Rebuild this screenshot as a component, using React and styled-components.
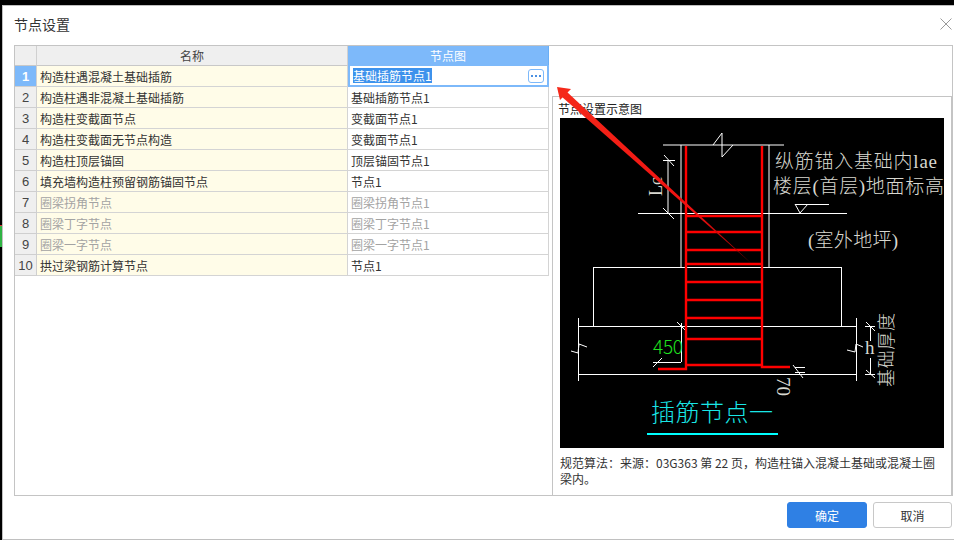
import React from 'react';
import styled, { createGlobalStyle } from 'styled-components';

const GlobalStyle = createGlobalStyle`
  html, body {
    margin: 0;
    padding: 0;
    background: #000;
    overflow: hidden;
  }
  * {
    box-sizing: border-box;
  }
`;

const FONT = `"Noto Sans CJK SC", "Liberation Sans", sans-serif`;

const Screen = styled.div`
  position: relative;
  width: 954px;
  height: 540px;
  padding: 5px 0 0 2px;
  background: #000;
  font-family: ${FONT};
  font-size: 12px;
  color: #333;
`;

const Window = styled.div`
  display: flex;
  flex-direction: column;
  height: 535px;
  background: #fff;
  border: 1px solid #c0c0c0;
  border-width: 1px 0 1px 1px;
`;

const TitleBar = styled.div`
  display: flex;
  align-items: center;
  justify-content: space-between;
  height: 39px;
  padding: 0 2px 3px 11px;
  font-size: 14px;
  color: #333;
`;

const CloseButton = styled.button`
  display: flex;
  width: 12px;
  height: 12px;
  padding: 0;
  border: 0;
  background: none;
`;

const Frame = styled.div`
  display: flex;
  height: 451px;
  margin: 0 1px 0 11px;
  border: 1px solid #c4c4c4;
`;

const Table = styled.div`
  flex: 0 0 537px;
  padding-right: 3px;
`;

const Row = styled.div`
  display: grid;
  grid-template-columns: 22px 311px 201px;
  height: ${p => (p.$head ? 20 : 21)}px;
`;

const HeadCell = styled.div`
  display: flex;
  align-items: center;
  justify-content: center;
  background: ${p => (p.$active ? '#7db9fa' : '#efefef')};
  color: ${p => (p.$active ? '#fff' : '#444')};
  border-right: 1px solid ${p => (p.$active ? '#69aef5' : '#d0d0d0')};
  border-bottom: 1px solid ${p => (p.$active ? '#69aef5' : '#c8c8c8')};
`;

const NumCell = styled.div`
  display: flex;
  align-items: center;
  justify-content: center;
  font-family: "Liberation Sans", sans-serif;
  font-size: 13px;
  font-weight: ${p => (p.$active ? 700 : 400)};
  background: ${p => (p.$active ? '#7db9fa' : '#efefef')};
  color: ${p => (p.$active ? '#fff' : '#444')};
  border-right: 1px solid #cfcfcf;
  border-bottom: 1px solid #cfcfcf;
`;

const Cell = styled.div`
  display: flex;
  align-items: center;
  padding-left: 3px;
  white-space: nowrap;
  background: ${p => (p.$name ? '#fffce8' : '#fff')};
  color: ${p => (p.$muted ? '#a3a3a3' : '#333')};
  border-right: 1px solid #d4d4d4;
  border-bottom: 1px solid #d4d4d4;
`;

const EditCell = styled.div`
  display: flex;
  align-items: center;
  justify-content: space-between;
  padding: 0 3px 0 3px;
  background: #fff;
  border: 2px solid #7db9fa;
  border-top-width: 1px;
  margin-top: -1px;
  height: 22px;
`;

const Selected = styled.span`
  display: block;
  line-height: 15px;
  background: #3d92ec;
  color: #fff;
  white-space: nowrap;
`;

const MoreButton = styled.button`
  display: flex;
  align-items: center;
  justify-content: center;
  gap: 2px;
  width: 16px;
  height: 14px;
  padding: 0;
  background: #fff;
  border: 1px solid #7db9fa;
  border-radius: 3px;
`;

const Dot = styled.i`
  width: 2px;
  height: 2px;
  background: #4a90e2;
`;

const Side = styled.div`
  display: flex;
  flex: 1;
  flex-direction: column;
  padding-top: 50px;
`;

const Panel = styled.div`
  flex: 1;
  padding-left: 5px;
  border: 1px solid #c4c4c4;
  border-width: 1px 1px 0 1px;
`;

const Caption = styled.div`
  height: 21px;
  line-height: 24px;
  color: #222;
`;

const Diagram = styled.svg`
  display: block;
  margin-left: 2px;
  width: 384px;
  height: 330px;
  background: #000;
`;

const Note = styled.p`
  margin: 7px 0 0 2px;
  width: 386px;
  line-height: 16px;
  font-size: 12px;
  color: #333;
`;

const Footer = styled.div`
  display: flex;
  justify-content: flex-end;
  gap: 6px;
  height: 43px;
  padding: 6px 2px 0 0;
`;

const Button = styled.button`
  width: ${p => (p.$primary ? 80 : 79)}px;
  height: 26px;
  padding: 0;
  font-family: ${FONT};
  font-size: 12px;
  border-radius: 3px;
  border: 1px solid ${p => (p.$primary ? '#2f80e4' : '#c8c8c8')};
  background: ${p => (p.$primary ? '#2f80e4' : '#fff')};
  color: ${p => (p.$primary ? '#fff' : '#333')};
`;

const Overlay = styled.svg`
  position: absolute;
  left: 0;
  top: 0;
  width: 954px;
  height: 540px;
  pointer-events: none;
`;

const DeskIcon = styled.div`
  position: absolute;
  left: 0;
  top: 225px;
  width: 2px;
  height: 22px;
  background: #2fb344;
  border-top: 1px solid #d33;
`;

const rows = [
  ['构造柱遇混凝土基础插筋', '基础插筋节点1'],
  ['构造柱遇非混凝土基础插筋', '基础插筋节点1'],
  ['构造柱变截面节点', '变截面节点1'],
  ['构造柱变截面无节点构造', '变截面节点1'],
  ['构造柱顶层锚固', '顶层锚固节点1'],
  ['填充墙构造柱预留钢筋锚固节点', '节点1'],
  ['圈梁拐角节点', '圈梁拐角节点1', true],
  ['圈梁丁字节点', '圈梁丁字节点1', true],
  ['圈梁一字节点', '圈梁一字节点1', true],
  ['拱过梁钢筋计算节点', '节点1'],
];

const NOTE = '规范算法\uFF1A来源\uFF1A03G363 第 22 页\uFF0C构造柱锚入混凝土基础或混凝土圈梁内\u3002';

const rungs = [216, 232, 250, 264, 282, 300, 318, 339, 365];

const whiteLines = [
  'M663 145H784', 'M713 145L722 133V157L733 145',
  'M681 145V267', 'M769 145V267',
  'M638 213.5H847',
  'M668 160V213', 'M663 160.5H675', 'M664 155L674 166', 'M663 208L674 219',
  'M795 204.5H829', 'M795 204L800 213L808 204',
  'M593 267.5H841', 'M593.5 267V326', 'M841.5 267V326',
  'M578 326.5H856', 'M578 374.5H856', 'M578.5 318V381', 'M856.5 318V381',
  'M571 351L578 353L579 344L587 347', 'M847 350L855 352L856 344L863 347',
  'M681.5 323V362', 'M653 362.5H681', 'M677 322L686 331', 'M653 367L662 358',
  'M795 367.5H805', 'M795 372.5H805', 'M793 365L803 378',
  'M870.5 326V341', 'M870.5 358V374', 'M865 326.5H875', 'M865 374.5H875',
  'M866 322L875 331', 'M866 370L875 378',
];

const CadText = styled.text`
  font-family: ${p => (p.$sans ? FONT : `"Liberation Serif", "Noto Sans CJK SC", serif`)};
  font-size: ${p => p.$size || 19}px;
  font-weight: 300;
  fill: ${p => p.$color || '#d8d8d0'};
`;

function FoundationDrawing() {
  return (
    <Diagram viewBox="560 118 384 330">
      <g stroke="#fff" strokeWidth="1" fill="none">
        {whiteLines.map(d => <path key={d} d={d} />)}
      </g>
      <g stroke="#f00" strokeWidth="2.4" fill="none">
        <path d="M686 146V369H658" />
        <path d="M762 146V367H790" />
        {rungs.map(y => <path key={y} d={`M686 ${y}H762`} />)}
      </g>
      <path d="M647 434H778" stroke="#0ff" strokeWidth="2" />
      <CadText x="775" y="168" textLength="162">纵筋锚入基础内lae</CadText>
      <CadText x="773" y="193" textLength="171">楼层(首层)地面标高</CadText>
      <CadText x="808" y="247" textLength="90">(室外地坪)</CadText>
      <CadText x="653" y="354" $sans $color="#1fe01f" textLength="30">450</CadText>
      <CadText x="865" y="354">h</CadText>
      <CadText x="651" y="421" $size={24} $color="#19e6e6" textLength="122">插筋节点一</CadText>
      <CadText transform="translate(662 196) rotate(-90)" $size={18}>Lc</CadText>
      <CadText transform="translate(777 377) rotate(90)" $size={19}>70</CadText>
      <CadText transform="translate(893 387) rotate(-90)" $size={18} textLength="74">基础厚度</CadText>
    </Diagram>
  );
}

export default function App() {
  return (
    <Screen>
      <GlobalStyle />
      <Window>
        <TitleBar>
          节点设置
          <CloseButton aria-label="关闭">
            <svg width="12" height="12" viewBox="0 0 12 12">
              <path d="M.5.5l11 11M11.5.5l-11 11" stroke="#9a9a9a" strokeWidth="1" fill="none" />
            </svg>
          </CloseButton>
        </TitleBar>
        <Frame>
          <Table>
            <Row $head>
              <HeadCell />
              <HeadCell>名称</HeadCell>
              <HeadCell $active>节点图</HeadCell>
            </Row>
            {rows.map(([name, node, muted], i) => (
              <Row key={name}>
                <NumCell $active={i === 0}>{i + 1}</NumCell>
                <Cell $name $muted={muted}>{name}</Cell>
                {i === 0 ? (
                  <EditCell>
                    <Selected>{node}</Selected>
                    <MoreButton aria-label="更多"><Dot /><Dot /><Dot /></MoreButton>
                  </EditCell>
                ) : (
                  <Cell $muted={muted}>{node}</Cell>
                )}
              </Row>
            ))}
          </Table>
          <Side>
            <Panel>
              <Caption>节点设置示意图</Caption>
              <FoundationDrawing />
              <Note>{NOTE}</Note>
            </Panel>
          </Side>
        </Frame>
        <Footer>
          <Button $primary>确定</Button>
          <Button>取消</Button>
        </Footer>
      </Window>
      <DeskIcon />
      <Overlay viewBox="0 0 954 540">
        <defs>
          <linearGradient id="shaft" gradientUnits="userSpaceOnUse" x1="560" y1="90" x2="752" y2="264">
            <stop offset="0" stopColor="#f5291a" />
            <stop offset="0.7" stopColor="#f01010" />
            <stop offset="1" stopColor="#900000" />
          </linearGradient>
        </defs>
        <path d="M566.5 91.5L561.5 96.5L752 264Z" fill="url(#shaft)" />
        <path d="M557 87L571 89L560 100Z" fill="#f5291a" />
      </Overlay>
    </Screen>
  );
}
